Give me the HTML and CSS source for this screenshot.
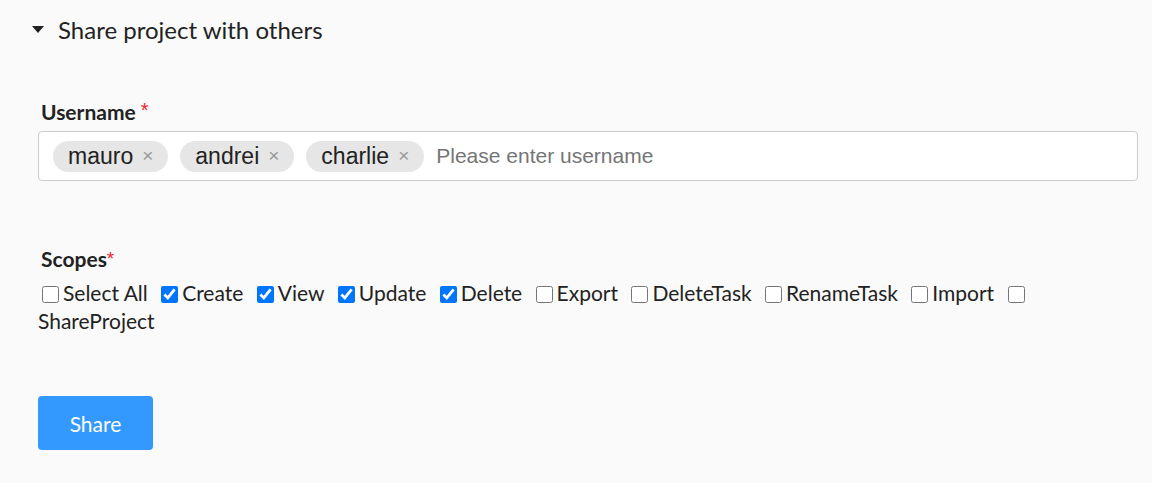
FILE: index.html
```html
<!DOCTYPE html>
<html>
<head>
<meta charset="utf-8">
<link rel="stylesheet" href="styles.css">
</head>
<body>
<div class="page">
  <div class="summary">
    <span class="caret"></span>
    <span class="summary-text">Share project with others</span>
  </div>
  <form class="form">
    <div class="field field-user">
      <div class="label">Username <span class="req">*</span></div>
      <div class="tag-input">
        <span class="tag"><span class="tag-text">mauro</span><span class="tag-x">×</span></span>
        <span class="tag"><span class="tag-text">andrei</span><span class="tag-x">×</span></span>
        <span class="tag"><span class="tag-text">charlie</span><span class="tag-x">×</span></span>
        <span class="placeholder">Please enter username</span>
      </div>
    </div>
    <div class="field field-scopes">
      <div class="label">Scopes<span class="req req-sm">*</span></div>
      <div class="checks">
        <input type="checkbox" id="c0"><label for="c0">Select All</label>
        <input type="checkbox" id="c1" checked><label for="c1">Create</label>
        <input type="checkbox" id="c2" checked><label for="c2">View</label>
        <input type="checkbox" id="c3" checked><label for="c3">Update</label>
        <input type="checkbox" id="c4" checked><label for="c4">Delete</label>
        <input type="checkbox" id="c5"><label for="c5">Export</label>
        <input type="checkbox" id="c6"><label for="c6">DeleteTask</label>
        <input type="checkbox" id="c7"><label for="c7">RenameTask</label>
        <input type="checkbox" id="c8"><label for="c8">Import</label>
        <input type="checkbox" id="c9"><label for="c9">ShareProject</label>
      </div>
    </div>
    <button type="button" class="btn">Share</button>
  </form>
</div>
</body>
</html>
```

FILE: styles.css
```css
html, body {
  margin: 0;
  padding: 0;
  background: #fafafa;
}
body {
  font-family: Lato, "Liberation Sans", sans-serif;
  color: #222;
}
.page {
  width: 1152px;
  height: 483px;
  box-sizing: border-box;
}
.summary {
  display: flex;
  align-items: center;
  padding: 16px 0 0 32px;
  height: 28px;
}
.caret {
  width: 0;
  height: 0;
  border-left: 6.5px solid transparent;
  border-right: 6.5px solid transparent;
  border-top: 7px solid #222;
  margin-right: 14px;
  margin-top: -1px;
}
.summary-text {
  font-size: 24px;
  line-height: 28px;
  color: #222;
}
.form {
  display: flex;
  flex-direction: column;
  align-items: flex-start;
  padding: 56px 14px 0 38px;
}
.field {
  align-self: stretch;
}
.label {
  font-weight: 700;
  font-size: 21px;
  line-height: 24px;
  height: 24px;
  padding-left: 3px;
  margin-bottom: 7px;
}
.req {
  color: #f5222d;
  font-family: "Liberation Sans", Arial, sans-serif;
  font-weight: 400;
  font-size: 20px;
  line-height: 0;
  vertical-align: 3px;
}
.req-sm {
  font-size: 19px;
  vertical-align: 2px;
}
.tag-input {
  display: flex;
  align-items: center;
  gap: 12px;
  height: 50px;
  box-sizing: border-box;
  border: 1px solid #ccc;
  border-radius: 4px;
  background: #fff;
  padding: 0 14px;
}
.tag {
  display: inline-flex;
  align-items: center;
  height: 31px;
  padding: 0 15px;
  border-radius: 16px;
  background: #e6e6e6;
  font-family: "Liberation Sans", Arial, sans-serif;
  font-size: 23px;
  color: #222;
}
.tag-text {
  margin-right: 9px;
}
.tag-x {
  font-size: 19px;
  color: #999;
}
.placeholder {
  font-family: "Liberation Sans", Arial, sans-serif;
  font-size: 21px;
  color: #757575;
}
.field-scopes {
  margin-top: 66px;
}
.field-scopes .label {
  margin-bottom: 8px;
}
.checks {
  font-size: 21px;
  line-height: 28px;
}
.checks input {
  width: 17px;
  height: 17px;
  margin: 0 4px 0 4px;
  vertical-align: -2px;
}
.checks label {
  margin-right: 4px;
}
.btn {
  margin-top: 61px;
  width: 115px;
  height: 54px;
  border: none;
  border-radius: 4px;
  background: #3399ff;
  color: #fff;
  font-family: Lato, sans-serif;
  font-size: 21px;
}
```
